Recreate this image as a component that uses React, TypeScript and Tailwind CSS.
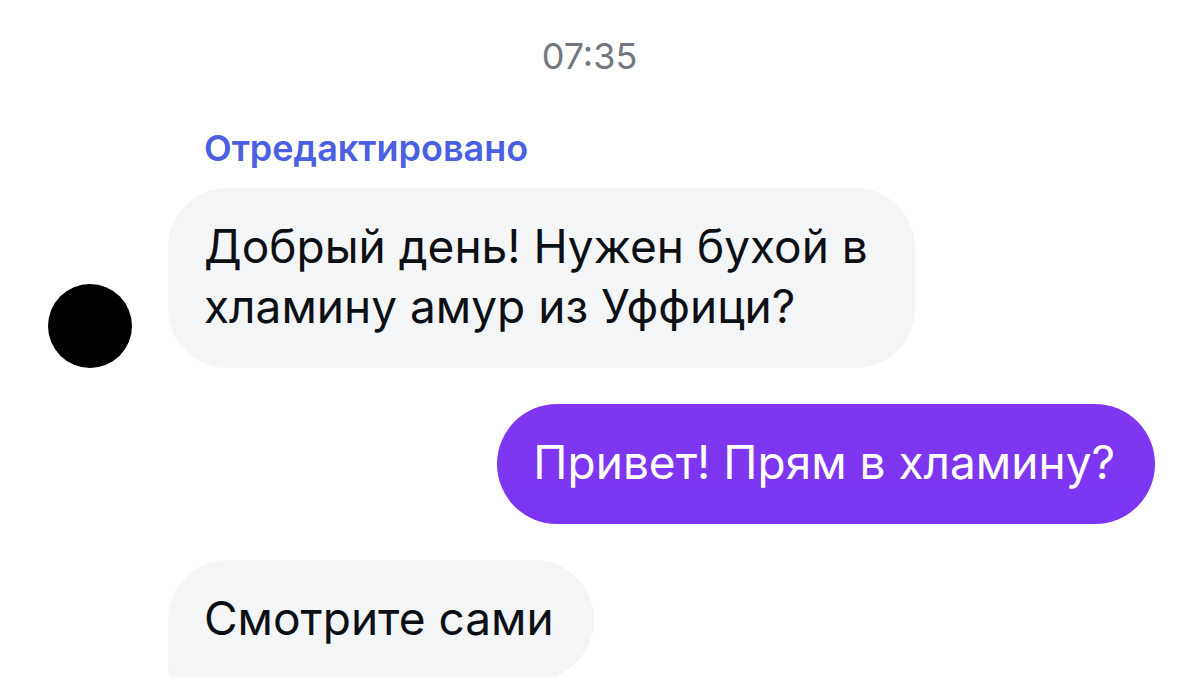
type Message = {
    text: string
    own?: boolean
    edited?: boolean
    avatar?: boolean
    continued?: boolean
}

const messages: Message[] = [
    {text: "Добрый день! Нужен бухой в хламину амур из Уффици?", edited: true, avatar: true},
    {text: "Привет! Прям в хламину?", own: true},
    {text: "Смотрите сами", continued: true},
]

const IncomingMessage = ({text, edited, avatar, continued}: Message) => {
    return <div className="flex items-end gap-9 pr-6 pl-12">
        <div className="w-[84px] shrink-0">
            {avatar && <div className="aspect-square rounded-full bg-black"/>}
        </div>
        <div className="flex flex-col items-start">
            {edited && <span className="mb-4 pl-9 text-[36px] leading-[48px] font-semibold text-[#4a5fe2]">
                Отредактировано
            </span>}
            <div className={"max-w-[747px] rounded-[60px] bg-[#f3f5f7] pt-7 pr-10 pb-8 pl-9 text-[#0c1014]" + (continued ? " rounded-bl-[12px]" : "")}>
                <p>{text}</p>
            </div>
        </div>
    </div>
}

const OutgoingMessage = ({text}: Message) => {
    return <div className="flex justify-end pr-6 pl-12">
        <div className="rounded-[60px] bg-linear-to-b from-[#8136ef] to-[#7b35f2] pt-7 pr-10 pb-8 pl-9 text-white">
            <p>{text}</p>
        </div>
    </div>
}

export default function App() {
    return <main className="flex h-screen flex-col overflow-hidden bg-white font-['Inter','Liberation_Sans',sans-serif] text-[46px] leading-[60px]">
        <time className="mt-8 mb-11 text-center text-[36px] leading-[48px] text-[#737780]">07:35</time>
        <div className="flex flex-col gap-9">
            {messages.map(message => message.own
                ? <OutgoingMessage key={message.text} {...message}/>
                : <IncomingMessage key={message.text} {...message}/>
            )}
        </div>
    </main>
}
